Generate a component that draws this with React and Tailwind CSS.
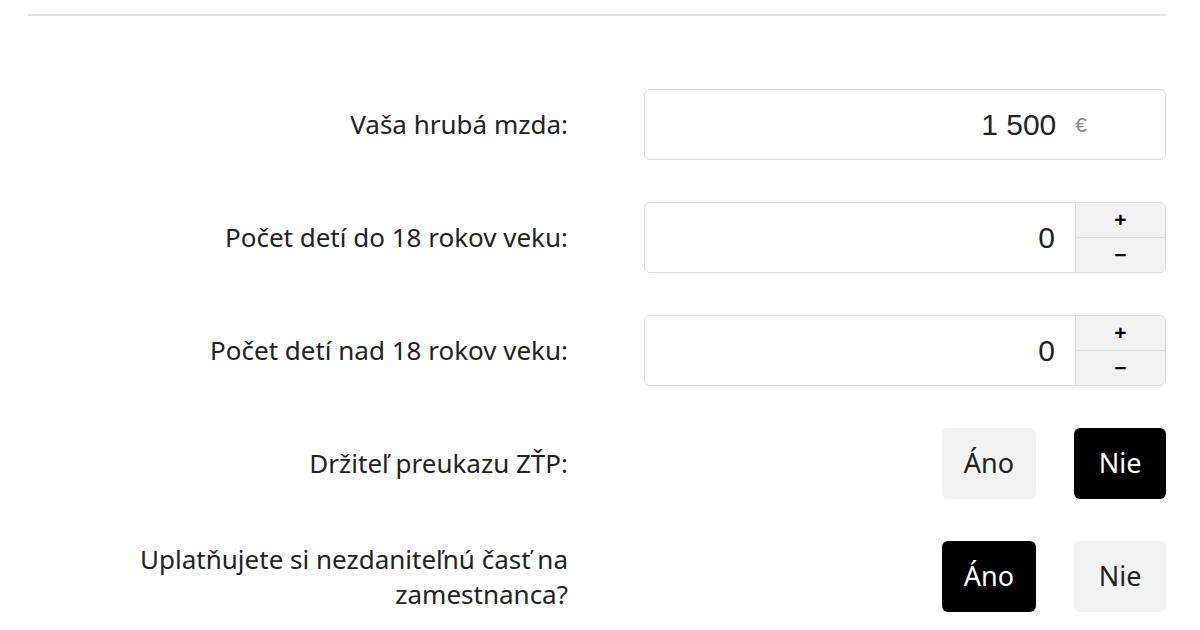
import { useState } from 'react'

function Stepper({ value, onChange }) {
  return (
    <div className="flex h-[71px] w-full overflow-hidden rounded-md border border-[#dcdcdc] bg-white">
      <div className="flex flex-1 items-center justify-end pr-[20px] font-['Liberation_Sans',Arial,sans-serif] text-[30px] text-[#222]">
        {value}
      </div>
      <div className="flex w-[90px] flex-col border-l border-[#dcdcdc] bg-[#f2f2f2]">
        <button
          onClick={() => onChange(value + 1)}
          className="flex flex-1 items-center justify-center border-b border-[#dcdcdc] font-['Liberation_Sans',Arial,sans-serif] text-[21px] font-bold text-black"
        >
          +
        </button>
        <button
          onClick={() => onChange(Math.max(0, value - 1))}
          className="flex flex-1 items-center justify-center font-['Liberation_Sans',Arial,sans-serif] text-[21px] font-bold text-black"
        >
          −
        </button>
      </div>
    </div>
  )
}

function Toggle({ value, onChange }) {
  const btn = (active) =>
    active
      ? 'h-[71px] rounded-md bg-black text-white'
      : 'h-[71px] rounded-md bg-[#f2f2f2] text-[#222]'
  return (
    <div className="flex justify-end gap-[38px] text-[27px]">
      <button onClick={() => onChange(true)} className={`${btn(value)} w-[94px]`}>
        Áno
      </button>
      <button onClick={() => onChange(false)} className={`${btn(!value)} w-[92px]`}>
        Nie
      </button>
    </div>
  )
}

export default function App() {
  const [kidsUnder, setKidsUnder] = useState(0)
  const [kidsOver, setKidsOver] = useState(0)
  const [ztp, setZtp] = useState(false)
  const [nczd, setNczd] = useState(true)

  const rows = [
    {
      label: 'Vaša hrubá mzda:',
      field: (
        <div className="flex h-[71px] w-full items-center justify-end rounded-md border border-[#dcdcdc] bg-white pr-[78px] font-['Liberation_Sans',Arial,sans-serif] text-[30px] text-[#222]">
          1 500
          <span className="ml-[19px] text-[21px] text-[#888]">€</span>
        </div>
      ),
    },
    { label: 'Počet detí do 18 rokov veku:', field: <Stepper value={kidsUnder} onChange={setKidsUnder} /> },
    { label: 'Počet detí nad 18 rokov veku:', field: <Stepper value={kidsOver} onChange={setKidsOver} /> },
    { label: 'Držiteľ preukazu ZŤP:', field: <Toggle value={ztp} onChange={setZtp} /> },
    {
      label: (
        <>
          <span className="block">Uplatňujete si nezdaniteľnú časť na</span>
          <span className="block">zamestnanca?</span>
        </>
      ),
      field: <Toggle value={nczd} onChange={setNczd} />,
    },
  ]

  return (
    <div className="min-h-[630px] bg-white font-['Noto_Sans',sans-serif] text-[#222]">
      <div className="ml-[28px] w-[1138px] pt-[14px]">
        <div className="h-[2px] bg-[#e2e2e2]" />
        <div className="mt-[73px] flex flex-col gap-[42px]">
          {rows.map((r, i) => (
            <div key={i} className="grid grid-cols-[540px_522px] items-center gap-[76px]">
              <div className="text-right text-[26px] leading-[35px]">{r.label}</div>
              {r.field}
            </div>
          ))}
        </div>
      </div>
    </div>
  )
}
